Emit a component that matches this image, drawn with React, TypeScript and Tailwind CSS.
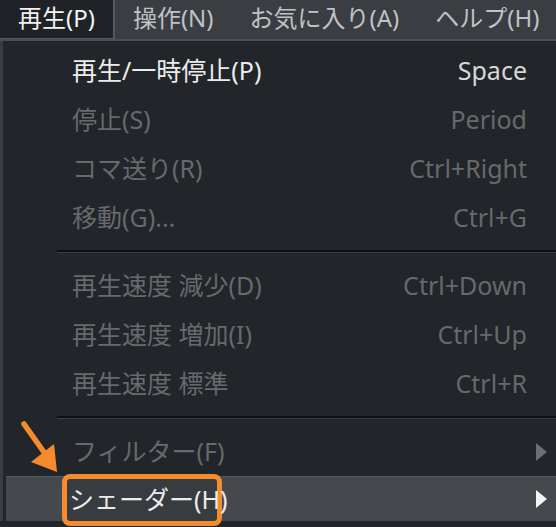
import React from 'react'

type Item = {
  label: string
  shortcut?: string
  enabled?: boolean
  submenu?: boolean
  highlighted?: boolean
}

const GROUPS: Item[][] = [
  [
    { label: '再生/一時停止(P)', shortcut: 'Space', enabled: true },
    { label: '停止(S)', shortcut: 'Period' },
    { label: 'コマ送り(R)', shortcut: 'Ctrl+Right' },
    { label: '移動(G)...', shortcut: 'Ctrl+G' },
  ],
  [
    { label: '再生速度 減少(D)', shortcut: 'Ctrl+Down' },
    { label: '再生速度 増加(I)', shortcut: 'Ctrl+Up' },
    { label: '再生速度 標準', shortcut: 'Ctrl+R' },
  ],
  [
    { label: 'フィルター(F)', submenu: true },
    { label: 'シェーダー(H)', submenu: true, enabled: true, highlighted: true },
  ],
]

const MENUS = ['再生(P)', '操作(N)', 'お気に入り(A)', 'ヘルプ(H)']

const Triangle = ({ color }: { color: string }) => (
  <svg width="11" height="18" viewBox="0 0 11 18">
    <path d="M0 0 L11 9 L0 18 Z" fill={color} />
  </svg>
)

const MenuRow = ({ item }: { item: Item }) => {
  const textColor = item.enabled ? 'text-[#ececec]' : 'text-[#66696d]'
  return (
    <div
      className={`relative flex items-center justify-between pr-[29px] ${
        item.highlighted
          ? 'ml-[3px] h-[45px] border-t border-[#56595d] bg-[#45484c] pl-[63px]'
          : 'h-[49px] pl-[69px]'
      }`}
    >
      {/* annotation box round the highlighted label */}
      {item.highlighted && (
        <div className="absolute left-[56px] top-[-3px] h-[52px] w-[160px] rounded-[8px] border-[5px] border-[#f68b2e] bg-[#383b3f]" />
      )}
      <span className={`relative ${textColor}`}>{item.label}</span>
      {item.shortcut && (
        <span className={item.enabled ? 'text-[#d6d7d9]' : 'text-[#66696d]'}>{item.shortcut}</span>
      )}
      {item.submenu && (
        <span className="-mr-[20px]">
          <Triangle color={item.enabled ? '#f4f4f4' : '#6c6f73'} />
        </span>
      )}
    </div>
  )
}

const Separator = () => (
  <div className="flex h-[19px] flex-col justify-center pl-[54px]">
    <div className="h-[2px] bg-[#0e1013]" />
    <div className="h-px bg-[#3a3d41]" />
  </div>
)

export default function App() {
  return (
    <div
      className="relative h-[527px] w-[556px] overflow-hidden bg-[#222529] text-[25px] leading-none"
      style={{ fontFamily: '"Noto Sans", "Noto Sans CJK JP", sans-serif' }}
    >
      {/* menu bar */}
      <div className="flex h-[41px] items-stretch overflow-hidden whitespace-nowrap border-b-2 border-[#4b4e52] bg-[#3a3d41] text-[24px]">
        {MENUS.map((m, i) => (
          <div
            key={m}
            className={`flex shrink-0 items-center px-[18px] pb-[3px] ${
              i === 0
                ? 'border-r-2 border-b border-[#55585c] bg-[#1f2226] text-[#f2f2f2]'
                : 'text-[#bfc2c6]'
            }`}
          >
            {m}
          </div>
        ))}
      </div>

      {/* dropdown */}
      <div className="border-l-[3px] border-[#393c40] pt-[5px]">
        {GROUPS.map((g, gi) => (
          <div key={gi}>
            {gi > 0 && <Separator />}
            {g.map(item => (
              <MenuRow key={item.label} item={item} />
            ))}
          </div>
        ))}
      </div>

      {/* annotation: arrow */}
      <svg className="absolute left-0 top-[400px]" width="80" height="80" viewBox="0 0 80 80">
        <line x1="24" y1="24" x2="46" y2="55" stroke="#f68b2e" strokeWidth="5.5" strokeLinecap="round" />
        <path d="M57 72 L31 62 L54 44 Z" fill="#f68b2e" />
      </svg>
    </div>
  )
}
